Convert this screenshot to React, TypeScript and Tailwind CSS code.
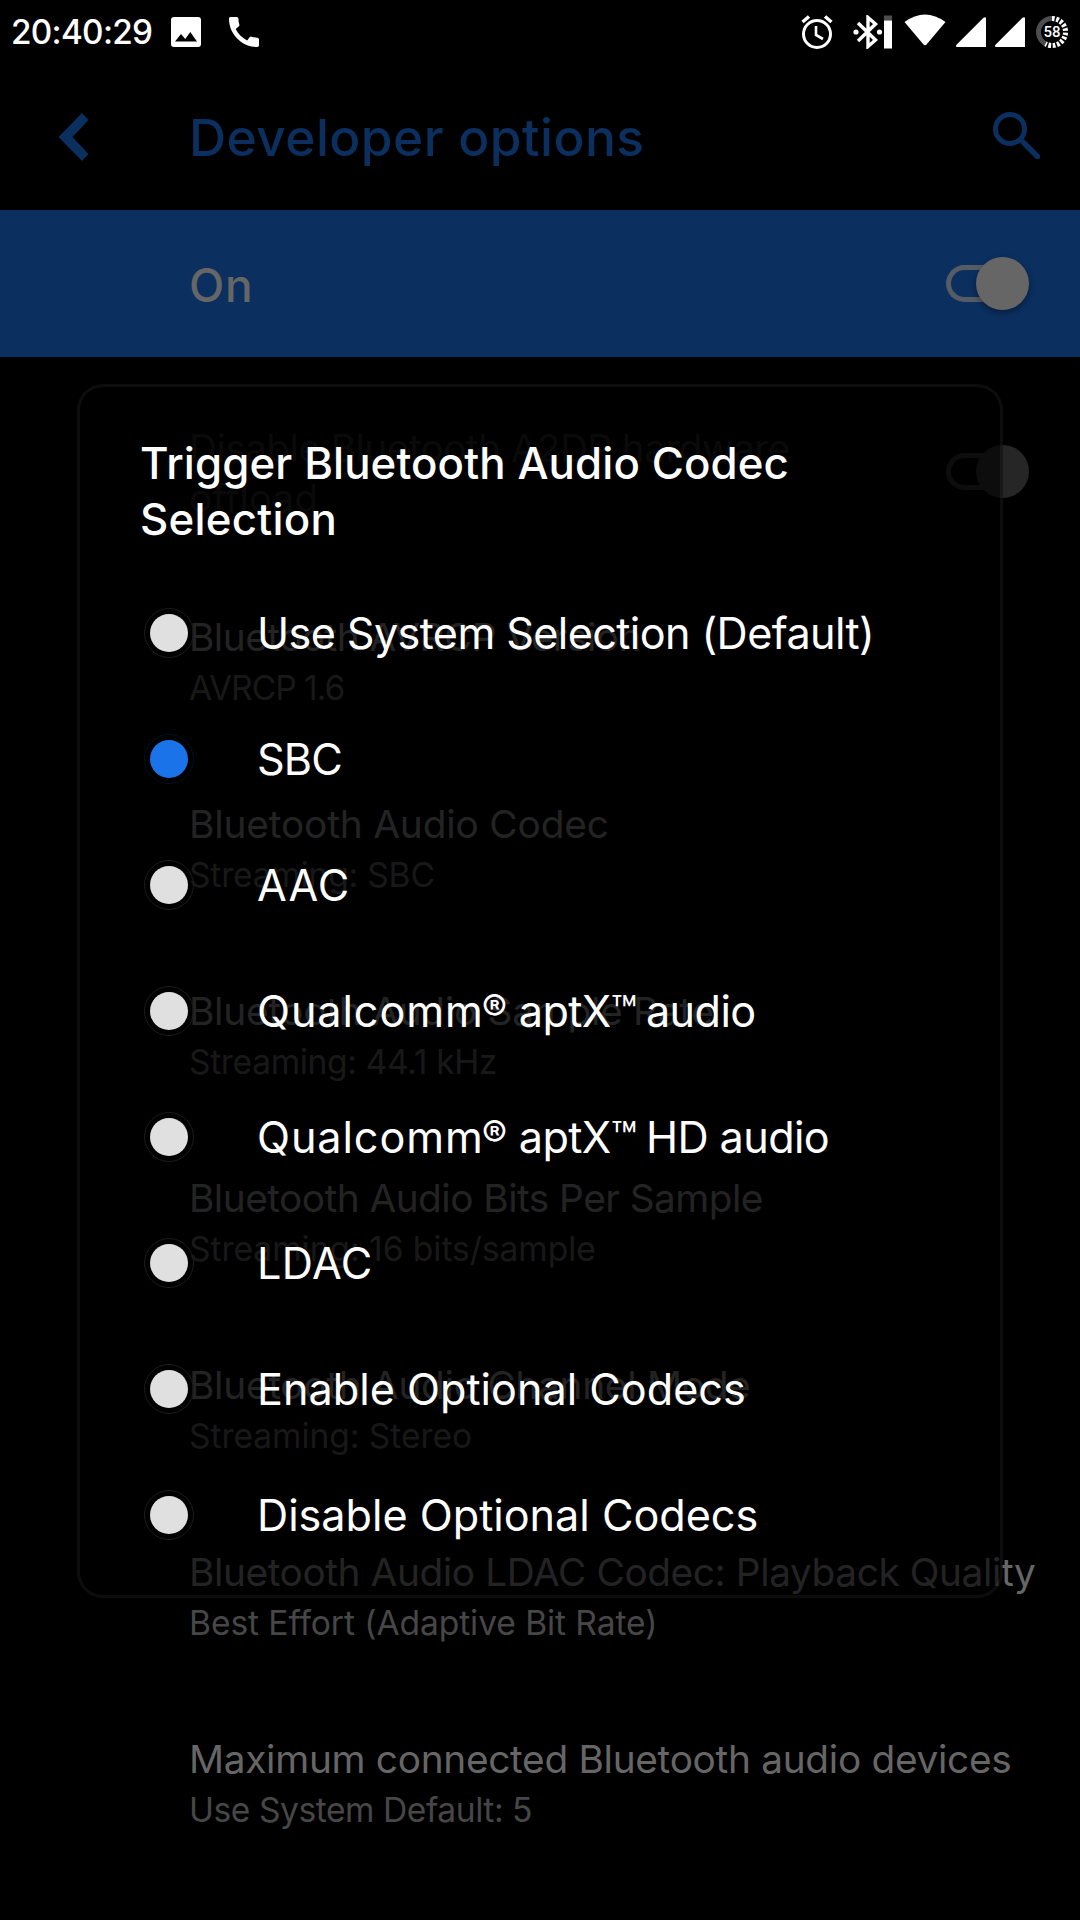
import React from "react";
import clsx from "clsx";

type Preference = {
  title: string;
  titleClass: string;
  summary: string;
  summaryClass: string;
};

type CodecOption = {
  id: string;
  label: React.ReactNode;
  className: string;
};

const preferences: Preference[] = [
  {
    title: "Bluetooth AVRCP Version",
    titleClass: "tracking-[-0.51px]",
    summary: "AVRCP 1.6",
    summaryClass: "tracking-[-0.99px]",
  },
  {
    title: "Bluetooth Audio Codec",
    titleClass: "tracking-[-0.15px]",
    summary: "Streaming: SBC",
    summaryClass: "tracking-[-0.2px]",
  },
  {
    title: "Bluetooth Audio Sample Rate",
    titleClass: "tracking-[-0.26px]",
    summary: "Streaming: 44.1 kHz",
    summaryClass: "tracking-[-0.34px]",
  },
  {
    title: "Bluetooth Audio Bits Per Sample",
    titleClass: "tracking-[-0.53px]",
    summary: "Streaming: 16 bits/sample",
    summaryClass: "tracking-[-0.04px]",
  },
  {
    title: "Bluetooth Audio Channel Mode",
    titleClass: "tracking-[-0.28px]",
    summary: "Streaming: Stereo",
    summaryClass: "tracking-[-0.06px]",
  },
  {
    title: "Bluetooth Audio LDAC Codec: Playback Quality",
    titleClass: "tracking-[-0.41px]",
    summary: "Best Effort (Adaptive Bit Rate)",
    summaryClass: "tracking-[-0.08px]",
  },
  {
    title: "Maximum connected Bluetooth audio devices",
    titleClass: "tracking-[-0.3px]",
    summary: "Use System Default: 5",
    summaryClass: "tracking-[-0.45px]",
  },
];

const Qualcomm = ({ suffix }: { suffix: string }) => (
  <>
    <span className="tracking-[0.9px]">Qualcomm</span>
    <span className="-ml-[2px] align-[5px] text-[38px] leading-none">®</span>
    <span className="tracking-[-0.6px]"> aptX™</span>
    <span className="-ml-[2px] tracking-[-0.6px]"> {suffix}</span>
  </>
);

const options: CodecOption[] = [
  { id: "default", label: "Use System Selection (Default)", className: "tracking-[-0.61px]" },
  { id: "sbc", label: "SBC", className: "tracking-[-0.9px]" },
  { id: "aac", label: "AAC", className: "tracking-[1px]" },
  { id: "aptx", label: <Qualcomm suffix="audio" />, className: "" },
  { id: "aptx-hd", label: <Qualcomm suffix="HD audio" />, className: "" },
  { id: "ldac", label: "LDAC", className: "tracking-[0.4px]" },
  { id: "enable", label: "Enable Optional Codecs", className: "tracking-normal" },
  { id: "disable", label: "Disable Optional Codecs", className: "tracking-[-0.02px]" },
];

function StatusBar() {
  return (
    <div className="flex h-[63px] items-center justify-between pr-3 pl-[11px] text-white">
      <div className="flex items-center">
        <span className="w-[160px] text-[33.3px] leading-10 font-medium tracking-[-0.71px]">
          20:40:29
        </span>
        <svg width="30" height="30" viewBox="0 0 30 30">
          <rect width="30" height="30" rx="3" fill="currentColor" />
          <path d="M4 24.500 10 17l4.200 5L19.300 15 26 24.500z" fill="#000" />
        </svg>
        <svg className="ml-7" width="30" height="30" viewBox="3 3 18 18" fill="currentColor">
          <path d="M20.010 15.380c-1.230 0-2.420-.2-3.530-.56-.35-.12-.74-.03-1.010.24l-1.570 1.970c-2.830-1.350-5.480-3.900-6.890-6.830l1.950-1.660c.27-.28.35-.67.24-1.020-.37-1.110-.56-2.300-.56-3.530 0-.54-.45-.99-.99-.99H4.190C3.650 3 3 3.240 3 3.990 3 13.280 10.730 21 20.010 21c.71 0 .99-.63.99-1.180v-3.450c0-.54-.45-.99-.99-.99z" />
        </svg>
      </div>

      <div className="flex items-center">
        {/* Alarm */}
        <svg width="32" height="34" viewBox="0 0 32 34" fill="none" stroke="currentColor">
          <circle cx="16" cy="19" r="13.500" strokeWidth="3" />
          <path d="M1.500 7 8 1.500M30.500 7 24 1.500" strokeWidth="3.500" />
          <path d="M15 11v9l7 4" strokeWidth="2.600" />
        </svg>
        {/* Bluetooth with device battery */}
        <svg className="ml-5" width="40" height="34" viewBox="0 0 40 34">
          <path
            d="m5 8 17.500 17-7.500 6.500v-29l7.500 6.500L5 26"
            fill="none"
            stroke="currentColor"
            strokeWidth="3.400"
          />
          <circle cx="3" cy="17" r="2.600" fill="currentColor" />
          <circle cx="26.500" cy="17" r="2.600" fill="currentColor" />
          <rect x="31" y="0.500" width="8" height="5" fill="#4d4d4d" />
          <rect x="31" y="5.500" width="8" height="28" fill="currentColor" />
        </svg>
        {/* Wifi */}
        <svg className="mb-1 ml-[11px]" width="42" height="32" viewBox="0 0 42 32" fill="currentColor">
          <path d="M.5 8Q21-7 41.500 8L22.500 30.500q-1.500 1.500-3 0z" />
        </svg>
        <svg className="ml-2.5" width="30" height="30" viewBox="0 0 30 30" fill="currentColor">
          <path d="M1 30Q-.8 29.500.5 27.800L27.500.8Q29.500-.6 30 1v29z" />
        </svg>
        <svg className="ml-[9px]" width="30" height="30" viewBox="0 0 30 30" fill="currentColor">
          <path d="M1 30Q-.8 29.500.5 27.800L27.500.8Q29.500-.6 30 1v29z" />
        </svg>
        {/* Battery ring */}
        <svg className="ml-[11px]" width="32" height="32" viewBox="0 0 32 32">
          <circle cx="16" cy="16" r="13.500" fill="none" stroke="#4d4d4d" strokeWidth="5" />
          <circle
            cx="16"
            cy="16"
            r="13.500"
            fill="none"
            stroke="#000"
            strokeWidth="5"
            pathLength="100"
            strokeDasharray="58 42"
            transform="rotate(-90 16 16)"
          />
          <path
            d="M16 2.500a13.500 13.500 0 1 1-6.500 25.300"
            fill="none"
            stroke="#fff"
            strokeWidth="5"
            strokeDasharray="2.700 1.600"
          />
          <text
            x="16"
            y="21"
            textAnchor="middle"
            fill="#fff"
            className="font-['Roboto',sans-serif] text-[15px] font-medium"
          >
            58
          </text>
        </svg>
      </div>
    </div>
  );
}

function Switch({ disabled }: { disabled?: boolean }) {
  return (
    <div className={clsx("flex h-[53px] w-[83px] items-center", disabled && "mb-1")}>
      <div
        className={clsx(
          "h-[37px] w-[60px] rounded-l-full border-5 border-r-0",
          disabled ? "border-[#262626]" : "border-[#575c64]"
        )}
      />
      <div
        className={clsx(
          "-ml-[30px] size-[53px] shrink-0 rounded-full",
          disabled ? "bg-[#262626]" : "bg-[#666] shadow-[0_3px_6px_rgba(0,0,0,0.35)]"
        )}
      />
    </div>
  );
}

function Radio({ checked }: { checked: boolean }) {
  return (
    <span
      className={clsx(
        "flex size-[50px] shrink-0 items-center justify-center rounded-full border",
        checked ? "border-[#03101f]" : "border-[#1c1c1c]"
      )}
    >
      <span
        className={clsx("size-[38px] rounded-full", checked ? "bg-[#1a73e8]" : "bg-[#e0e0e0]")}
      />
    </span>
  );
}

function CodecDialog() {
  const [selected, setSelected] = React.useState("sbc");

  return (
    <div
      role="dialog"
      className="absolute top-[384px] left-[77px] h-[1214px] w-[926px] rounded-[26px] border-3 border-white/5 bg-black/65 pt-[49px] text-white"
    >
      <h2 className="pl-[60px] text-[43.8px] leading-[56px] font-medium">
        <span className="tracking-[0.11px]">Trigger Bluetooth Audio Codec</span>
        <br />
        <span className="tracking-[0.25px]">Selection</span>
      </h2>
      <ul className="mt-[22px]">
        {options.map((option) => (
          <li
            key={option.id}
            onClick={() => setSelected(option.id)}
            className="flex h-[126px] items-center pl-16 text-[43.2px] leading-[52px]"
          >
            <Radio checked={option.id === selected} />
            <span className={clsx("ml-[63px] whitespace-nowrap", option.className)}>
              {option.label}
            </span>
          </li>
        ))}
      </ul>
    </div>
  );
}

export default function App() {
  return (
    <div className="relative h-[1920px] w-[1080px] overflow-hidden bg-black font-['Inter',sans-serif]">
      <StatusBar />

      <header className="flex h-[147px] items-center pr-10 pl-[58px] text-[#0b2f5f]">
        <svg width="31" height="48" viewBox="0 0 31 48" fill="currentColor">
          <path d="M24 0 .5 24 24 48l6.500-7L14.500 24l16-17z" />
        </svg>
        <h1 className="ml-[100px] text-[51.4px] leading-[60px] font-medium tracking-[0.47px]">
          Developer options
        </h1>
        <svg className="mb-[3px] ml-auto" width="47" height="47" viewBox="0 0 47 47" fill="none" stroke="currentColor">
          <circle cx="17" cy="17" r="14.500" strokeWidth="5" />
          <path d="m28 28 2.500 2.500" strokeWidth="5" />
          <path d="m31 31 13.500 13.500" strokeWidth="5.500" strokeLinecap="round" />
        </svg>
      </header>

      <div className="flex h-[147px] items-center justify-between bg-[#0b2f5f] pr-[51px] pl-[189px]">
        <span className="pt-[3px] text-[46px] leading-[52px] font-medium tracking-[0.8px] text-[#666]">
          On
        </span>
        <Switch />
      </div>

      <main className="pt-[66px] pl-[189px]">
        <div className="mb-[89px] flex h-[100px] items-center justify-between pr-[51px] text-[38.8px] leading-[50px] text-[#1f1f1f]">
          <p>
            <span className="tracking-[-0.58px]">Disable Bluetooth A2DP hardware</span>
            <br />
            <span className="tracking-normal">offload</span>
          </p>
          <Switch disabled />
        </div>

        {preferences.map((item) => (
          <div key={item.title} className="h-[187px] whitespace-nowrap">
            <p className={clsx("text-[38.8px] leading-[50px] text-[#666]", item.titleClass)}>
              {item.title}
            </p>
            <p className={clsx("text-[33.6px] leading-[52px] text-[#474747]", item.summaryClass)}>
              {item.summary}
            </p>
          </div>
        ))}
      </main>

      <CodecDialog />
    </div>
  );
}
